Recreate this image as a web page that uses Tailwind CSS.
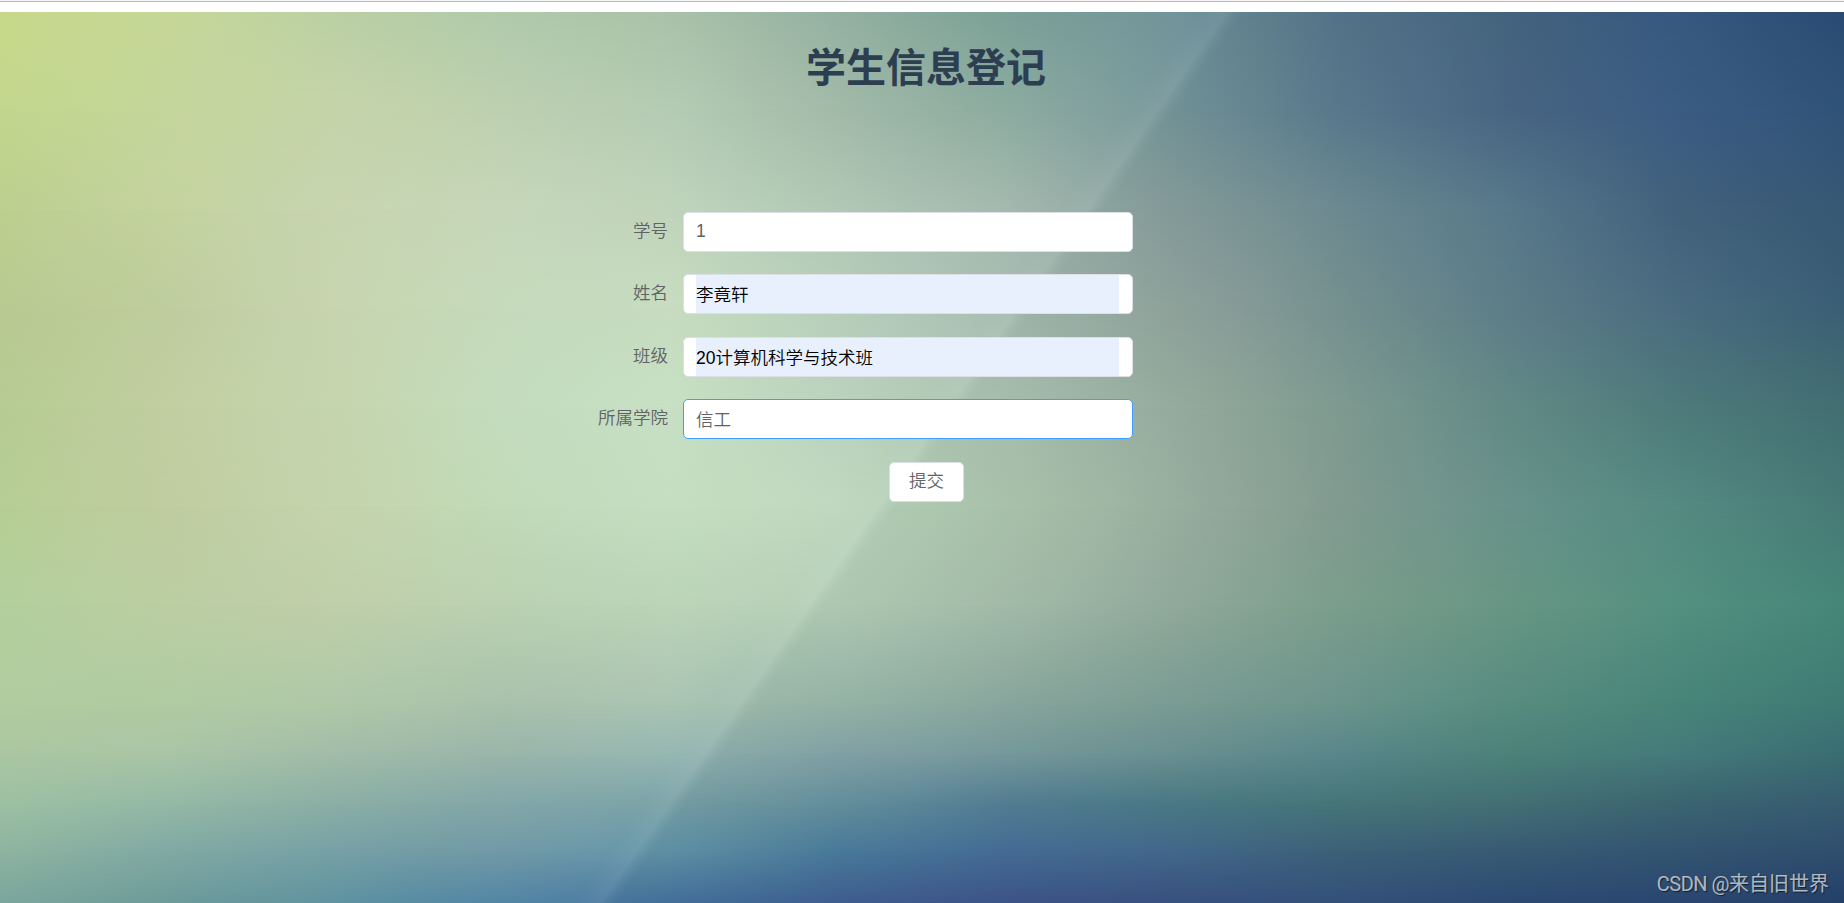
<!DOCTYPE html>
<html lang="zh-CN">
<head>
  <meta charset="UTF-8">
  <meta name="viewport" content="width=device-width, initial-scale=1.0">
  <title>学生信息登记</title>
  <script src="https://cdn.jsdelivr.net/npm/@tailwindcss/browser@4"></script>
</head>
<body class="h-screen overflow-hidden flex flex-col bg-white font-['Liberation_Sans','Noto_Sans_CJK_SC',sans-serif] font-[350] text-[17.5px] text-[#606266]">
  <div class="h-0.5 shrink-0 bg-[#f4f4f4] border-b border-[#bcbcbc]"></div>

  <main class="relative isolate flex-1 mt-2.5 overflow-hidden">
    <!-- Background -->
    <div id="backdrop" class="absolute inset-0 -z-10"></div>
    <svg class="absolute inset-0 -z-10 w-full h-full" viewBox="0 0 1844 891" preserveAspectRatio="none">
      <defs>
        <linearGradient id="beam" gradientUnits="userSpaceOnUse" x1="774" y1="337" x2="1074" y2="548">
          <stop offset="0" stop-color="#fff" stop-opacity="0"/>
          <stop offset=".42" stop-color="#dff0f0" stop-opacity=".03"/>
          <stop offset=".48" stop-color="#dff0f0" stop-opacity=".09"/>
          <stop offset=".52" stop-color="#204040" stop-opacity=".05"/>
          <stop offset="1" stop-color="#204040" stop-opacity="0"/>
        </linearGradient>
      </defs>
      <rect width="1844" height="891" fill="url(#beam)"/>
    </svg>

    <h1 class="pt-[26px] pl-2 text-center text-[40px] leading-[60px] font-bold text-[#2c3e50]">学生信息登记</h1>

    <form class="mt-[113.75px] ml-[558px] w-[575px] flex flex-col gap-[22.5px]">
      <div class="flex h-10">
        <label class="w-[125px] pr-[15px] text-right leading-[39px]">学号</label>
        <div class="flex-1 rounded-[5px] border border-[#dcdfe6] bg-white px-3">
          <input class="block w-full h-full outline-none pb-px" value="1">
        </div>
      </div>
      <div class="flex h-10">
        <label class="w-[125px] pr-[15px] text-right leading-[39px]">姓名</label>
        <div class="flex-1 rounded-[5px] border border-[#dcdfe6] bg-white pl-3 pr-[13px]">
          <input class="block w-full h-full outline-none pb-px bg-[#e8f0fe] text-black" value="李竟轩">
        </div>
      </div>
      <div class="flex h-10">
        <label class="w-[125px] pr-[15px] text-right leading-[39px]">班级</label>
        <div class="flex-1 rounded-[5px] border border-[#dcdfe6] bg-white pl-3 pr-[13px]">
          <input class="block w-full h-full outline-none pb-px bg-[#e8f0fe] text-black" value="20计算机科学与技术班">
        </div>
      </div>
      <div class="flex h-10">
        <label class="w-[125px] pr-[15px] text-right leading-[39px]">所属学院</label>
        <div class="flex-1 rounded-[5px] border border-[#409eff] bg-white px-3">
          <input class="block w-full h-full outline-none pb-px" value="信工">
        </div>
      </div>
      <button type="button" class="ml-[331px] w-[75px] h-10 rounded-[5px] border border-[#dcdfe6] bg-white pb-0.5">提交</button>
    </form>

    <div class="absolute right-[15px] bottom-1 text-xl leading-[30px] font-normal text-white/65 [text-shadow:1px_1px_1px_rgba(0,0,0,0.6)] font-[Roboto,'Noto_Sans_CJK_SC',sans-serif]"><span class="tracking-tight">CSDN @</span>来自旧世界</div>
  </main>

  <script>
    // colour mesh: [y in percent, evenly spaced colours from left to right]
    const mesh = [
      [0, '#c6d989 #c6d898 #bbd0a4 #b1caab #a9c2a9 #94b1a1 #7ca197 #6f9299 #557389 #43637e #37597f #2a4b74'],
      [11.1, '#c2d68d #c4d69b #c5d4a9 #bdd0b0 #b5cbb4 #a2baa8 #8cab9f #76959a #58788c #476582 #3b5c82 #305378'],
      [22.2, '#bccf8f #c3d39f #c7d5b0 #c6d7b9 #c0d4bc #b1c8b5 #a2b8ad #869d9b #6c8990 #57798a #41617c #375874'],
      [33.3, '#b8ca90 #becd9e #c7d5b0 #c5dabb #c7dcc0 #b8cebb #a6bbb0 #90a39c #75908f #5d7d88 #4a6c80 #3a5f74'],
      [44.4, '#b6cb93 #c1cfa1 #c5d5ae #c4dcbd #c7e0c4 #bad2bc #acc2b0 #95ab9d #7e9a90 #628a86 #4e7a7a #436e72'],
      [55.5, '#b6ce95 #bfcda0 #c4d4ac #c2dab8 #c4dec1 #bed8be #abc4ac #98ae9e #819a90 #68928a #548a82 #467a76'],
      [66.6, '#b3cf9c #bbcea2 #bfcfaa #bbd1b1 #bad4b8 #b4ceb6 #a2bba8 #90a99a #7b9d8c #689684 #54907f #468679'],
      [77.7, '#b1cc9f #b0cba2 #afc8a8 #a8c1ac #a8c3b1 #98b6a9 #88a59c #7a9b93 #6b948c #578c7f #488479 #3f7a74'],
      [83.3, '#aac7a1 #a9c5a6 #a1bca8 #9ab5aa #94b5b1 #83a2a6 #75989a #698f90 #59868a #4b8279 #457a7a #3a6d72'],
      [88.8, '#9dc0a2 #94b9a6 #8bafa5 #82a7a8 #78a0a6 #648f9c #527c92 #4a7884 #467578 #446f74 #3b6470 #375c70'],
      [94.3, '#8eb4a0 #80a9a3 #76a0a5 #6f98a5 #5f92a8 #487999 #446b94 #42678a #3c6078 #375a74 #335470 #2f4e6e'],
      [100, '#7aa69c #6d9a99 #5f93a0 #4f83a4 #43709c #3e5d8e #3c5387 #38507e #33507a #2c4a72 #294670 #24406a'],
    ];
    const backdrop = document.getElementById('backdrop');
    mesh.forEach(([y, row], i) => {
      const layer = document.createElement('div');
      layer.className = 'absolute inset-0';
      layer.style.background = `linear-gradient(to right, ${row.split(' ').join(', ')})`;
      if (i > 0) layer.style.maskImage = `linear-gradient(transparent ${mesh[i - 1][0]}%, #000 ${y}%)`;
      backdrop.appendChild(layer);
    });
  </script>
</body>
</html>
